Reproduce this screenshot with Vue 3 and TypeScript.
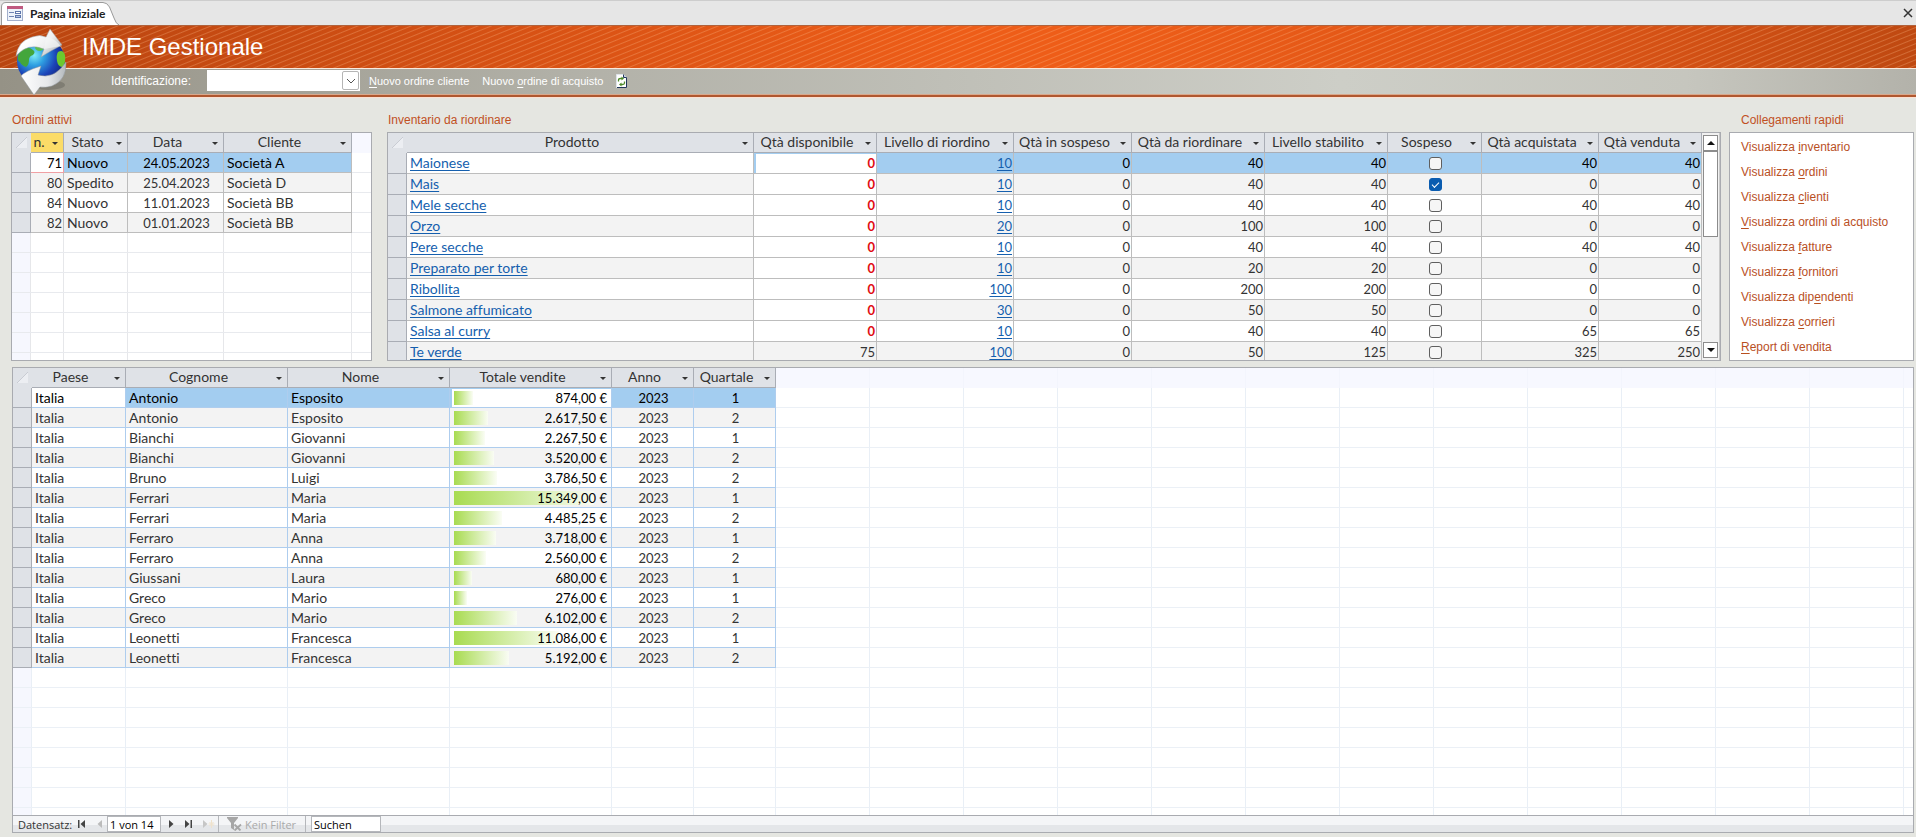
<script setup lang="ts">
import { computed, ref } from 'vue'

interface Column {
  label: string
  width: number
  align: 'left' | 'center' | 'right'
}

interface Sale {
  country: string
  surname: string
  name: string
  total: number
  year: number
  quarter: number
}

interface QuickLink {
  before: string
  key: string
  after: string
}

const SELECTOR_WIDTH = 19

const customerId = ref('')
const recordPosition = ref('1 von 14')
const searchText = ref('Suchen')

const orderColumns: Column[] = [
  { label: 'n.', width: 33, align: 'right' },
  { label: 'Stato', width: 64, align: 'left' },
  { label: 'Data', width: 96, align: 'center' },
  { label: 'Cliente', width: 128, align: 'left' },
]

const orders: string[][] = [
  ['71', 'Nuovo', '24.05.2023', 'Società A'],
  ['80', 'Spedito', '25.04.2023', 'Società D'],
  ['84', 'Nuovo', '11.01.2023', 'Società BB'],
  ['82', 'Nuovo', '01.01.2023', 'Società BB'],
]

const stockColumns: Column[] = [
  { label: 'Prodotto', width: 0, align: 'left' },
  { label: 'Qtà disponibile', width: 123, align: 'right' },
  { label: 'Livello di riordino', width: 137, align: 'right' },
  { label: 'Qtà in sospeso', width: 118, align: 'right' },
  { label: 'Qtà da riordinare', width: 133, align: 'right' },
  { label: 'Livello stabilito', width: 123, align: 'right' },
  { label: 'Sospeso', width: 94, align: 'center' },
  { label: 'Qtà acquistata', width: 117, align: 'right' },
  { label: 'Qtà venduta', width: 103, align: 'right' },
]

const stock = ref([
  { product: 'Maionese', available: 0, reorder: 10, pending: 0, toOrder: 40, target: 40, stopped: false, bought: 40, sold: 40 },
  { product: 'Mais', available: 0, reorder: 10, pending: 0, toOrder: 40, target: 40, stopped: true, bought: 0, sold: 0 },
  { product: 'Mele secche', available: 0, reorder: 10, pending: 0, toOrder: 40, target: 40, stopped: false, bought: 40, sold: 40 },
  { product: 'Orzo', available: 0, reorder: 20, pending: 0, toOrder: 100, target: 100, stopped: false, bought: 0, sold: 0 },
  { product: 'Pere secche', available: 0, reorder: 10, pending: 0, toOrder: 40, target: 40, stopped: false, bought: 40, sold: 40 },
  { product: 'Preparato per torte', available: 0, reorder: 10, pending: 0, toOrder: 20, target: 20, stopped: false, bought: 0, sold: 0 },
  { product: 'Ribollita', available: 0, reorder: 100, pending: 0, toOrder: 200, target: 200, stopped: false, bought: 0, sold: 0 },
  { product: 'Salmone affumicato', available: 0, reorder: 30, pending: 0, toOrder: 50, target: 50, stopped: false, bought: 0, sold: 0 },
  { product: 'Salsa al curry', available: 0, reorder: 10, pending: 0, toOrder: 40, target: 40, stopped: false, bought: 65, sold: 65 },
  { product: 'Te verde', available: 75, reorder: 100, pending: 0, toOrder: 50, target: 125, stopped: false, bought: 325, sold: 250 },
])

const salesColumns: Column[] = [
  { label: 'Paese', width: 94, align: 'left' },
  { label: 'Cognome', width: 162, align: 'left' },
  { label: 'Nome', width: 162, align: 'left' },
  { label: 'Totale vendite', width: 162, align: 'right' },
  { label: 'Anno', width: 82, align: 'center' },
  { label: 'Quartale', width: 82, align: 'center' },
]

const sale = (surname: string, name: string, total: number, quarter: number): Sale => ({
  country: 'Italia', surname, name, total, year: 2023, quarter,
})

const sales: Sale[] = [
  sale('Antonio', 'Esposito', 874, 1),
  sale('Antonio', 'Esposito', 2617.5, 2),
  sale('Bianchi', 'Giovanni', 2267.5, 1),
  sale('Bianchi', 'Giovanni', 3520, 2),
  sale('Bruno', 'Luigi', 3786.5, 2),
  sale('Ferrari', 'Maria', 15349, 1),
  sale('Ferrari', 'Maria', 4485.25, 2),
  sale('Ferraro', 'Anna', 3718, 1),
  sale('Ferraro', 'Anna', 2560, 2),
  sale('Giussani', 'Laura', 680, 1),
  sale('Greco', 'Mario', 276, 1),
  sale('Greco', 'Mario', 6102, 2),
  sale('Leonetti', 'Francesca', 11086, 1),
  sale('Leonetti', 'Francesca', 5192, 2),
]

const quickLinks: QuickLink[] = [
  { before: 'Visualizza ', key: 'i', after: 'nventario' },
  { before: 'Visualizza ', key: 'o', after: 'rdini' },
  { before: 'Visualizza ', key: 'c', after: 'lienti' },
  { before: '', key: 'V', after: 'isualizza ordini di acquisto' },
  { before: 'Visualizza ', key: 'f', after: 'atture' },
  { before: 'Visualizza ', key: 'f', after: 'ornitori' },
  { before: 'Visualizza dip', key: 'e', after: 'ndenti' },
  { before: 'Visualizza ', key: 'c', after: 'orrieri' },
  { before: '', key: 'R', after: 'eport di vendita' },
]

const euro = (value: number): string => {
  const [whole, cents] = value.toFixed(2).split('.')
  return `${whole.replace(/\B(?=(\d{3})+$)/g, '.')},${cents} €`
}

const barWidth = (total: number): string => `${Math.round(7 + (total / 15349) * 80)}%`

const sum = (columns: Column[]): number => columns.reduce((acc, c) => acc + c.width, SELECTOR_WIDTH)

/* Column rules that run on below the last record of a datasheet. */
const columnRules = (widths: number[], color: string) => {
  let x = SELECTOR_WIDTH
  const stops = [x - 1, ...widths.map((w) => (x += w) - 1)]
  return {
    backgroundImage: stops.map(() => `linear-gradient(${color}, ${color})`).join(','),
    backgroundPosition: stops.map((s) => `${s}px 0`).join(','),
  }
}

const orderRules = computed(() => columnRules(orderColumns.map((c) => c.width), '#e6e7ea'))
const salesRules = computed(() =>
  columnRules([...salesColumns.map((c) => c.width), ...Array<number>(24).fill(94)], '#e9eff6'),
)
</script>

<template>
  <div class="page">
    <nav class="tabs">
      <svg class="tab-shape" width="120" height="24" viewBox="0 0 120 24" aria-hidden="true">
        <path d="M1.500 24V6Q1.500 1.500 6 1.500H103Q107 1.500 109.500 6L114 17Q116 23 119 24" fill="#fff" stroke="#9a9a9a" />
      </svg>
      <a class="tab" href="#">
        <svg width="16" height="15" viewBox="0 0 16 15" aria-hidden="true">
          <rect x=".5" y=".5" width="15" height="14" fill="#eef3fa" stroke="#a3b0cc" />
          <rect width="16" height="3" fill="#c05a80" />
          <path d="M2 6.500h5M2 10.500h5" stroke="#7286b4" />
          <rect x="8.500" y="5.500" width="5" height="2" fill="#fff" stroke="#5f77ab" />
          <rect x="8.500" y="9.500" width="5" height="2" fill="#b4c4e4" stroke="#5f77ab" />
        </svg>
        Pagina iniziale
      </a>
      <button class="close" type="button" aria-label="Chiudi">
        <svg width="10" height="10" viewBox="0 0 10 10"><path d="M1 1l8 8M9 1L1 9" stroke="#333" stroke-width="1.500" /></svg>
      </button>
    </nav>

    <header class="head">
      <div class="banner"><h1>IMDE Gestionale</h1></div>
      <div class="toolbar">
        <label for="ident">Identificazione:</label>
        <span class="combo">
          <select id="ident" v-model="customerId"><option value=""></option></select>
          <span class="combo-arrow">
            <svg width="10" height="6" viewBox="0 0 10 6"><path d="M1 1l4 4 4-4" fill="none" stroke="#555" /></svg>
          </span>
        </span>
        <a class="cmd" href="#"><u>N</u>uovo ordine cliente</a>
        <a class="cmd" href="#">Nuovo <u>o</u>rdine di acquisto</a>
        <button class="refresh" type="button" aria-label="Aggiorna">
          <svg width="11" height="14" viewBox="0 0 11 14">
            <path d="M.5.5h7l3 3v10H.5z" fill="#fff" stroke="#dfe4ea" />
            <path d="M10.500 3.500v10H1" fill="none" stroke="#23365c" />
            <path d="M7.500.5v3h3" fill="#b9c6dc" stroke="#23365c" />
            <path d="M2.500 7.500V6q0-1.500 2-1.500H6M8.500 7.500V9q0 1.500-2 1.500H5" fill="none" stroke="#4e8a2a" stroke-width="1.300" />
            <path d="M5.500 2.500L8 4.500l-2.500 2zM5.500 8.500L3 10.500l2.500 2z" fill="#4e8a2a" />
          </svg>
        </button>
      </div>
      <svg class="logo" width="56" height="68" viewBox="0 0 56 68" aria-hidden="true">
        <defs>
          <radialGradient id="sea" cx=".36" cy=".38" r=".7">
            <stop offset="0" stop-color="#7fecf8" />
            <stop offset=".3" stop-color="#2fa0e2" />
            <stop offset=".65" stop-color="#1c44b8" />
            <stop offset="1" stop-color="#101f74" />
          </radialGradient>
          <linearGradient id="silver" x1="0" y1="0" x2="1" y2=".6">
            <stop offset="0" stop-color="#d4d7d9" />
            <stop offset=".35" stop-color="#fff" />
            <stop offset=".7" stop-color="#eff0f1" />
            <stop offset="1" stop-color="#b9bdc0" />
          </linearGradient>
          <linearGradient id="silverLow" x1="0" y1="0" x2="1" y2="0">
            <stop offset="0" stop-color="#fff" />
            <stop offset=".6" stop-color="#e6e8ea" />
            <stop offset="1" stop-color="#b3b8bc" />
          </linearGradient>
        </defs>
        <ellipse cx="34" cy="57" rx="17" ry="5" fill="#000" opacity=".16" />
        <circle cx="27" cy="33" r="24" fill="url(#sea)" />
        <path d="M4 28q2-6 7-8 5-1 8 2 3 2 0 5-4 1-4 5 0 5-3 7-5-2-6-5-3-1-2-6z" fill="#43a63c" />
        <path d="M21 19q6-3 10 0-2 4-6 4-4-1-4-4z" fill="#5fc04e" />
        <path d="M44 24q5-3 7 3 1 7-2 12-5 0-6-6-1-6 1-9z" fill="#6cc92f" />
        <path d="M2 28Q4 13 18 9q8-3 14 0l4-8 12 16q-10 5-21 12l3-8Q14 14 2 28z" fill="url(#silver)" stroke="#9aa0a4" stroke-width=".5" />
        <path d="M32 9q12 1 18 16l-3-7-17 3z" fill="#f4f5f5" opacity=".7" />
        <path d="M52 34Q53 52 38 58q-7 2-12 1l-6 8L7 48q4-5 20-10l-3 9q16 5 28-13z" fill="url(#silverLow)" stroke="#8e9498" stroke-width=".5" />
      </svg>
    </header>

    <main class="content">
      <div class="top">
        <section class="orders">
          <h2>Ordini attivi</h2>
          <div class="panel grid-bg" :style="orderRules">
            <div class="head-fill"></div>
            <table :style="{ width: sum(orderColumns) + 'px' }">
              <colgroup><col :style="{ width: SELECTOR_WIDTH + 'px' }" /><col v-for="c in orderColumns" :key="c.label" :style="{ width: c.width + 'px' }" /></colgroup>
              <thead>
                <tr>
                  <th class="sel"><svg width="11" height="11" viewBox="0 0 11 11"><path d="M11 0v11H0z" fill="#eceef2" /><path d="M0 11L11 0" stroke="#c9ccd3" /></svg></th>
                  <th v-for="(c, i) in orderColumns" :key="c.label" :class="{ sorted: i === 0 }"><button type="button">{{ c.label }}<i class="arrow"></i></button></th>
                </tr>
              </thead>
              <tbody>
                <tr v-for="(row, r) in orders" :key="r" :class="{ current: r === 0 }">
                  <td class="sel"></td>
                  <td v-for="(cell, i) in row" :key="i" :class="[orderColumns[i].align, { focus: r === 0 && i === 0 }]">{{ cell }}</td>
                </tr>
              </tbody>
            </table>
          </div>
        </section>

        <section class="stock">
          <h2>Inventario da riordinare</h2>
          <div class="panel with-scroll">
            <div class="viewport">
              <table class="tall">
                <colgroup><col :style="{ width: SELECTOR_WIDTH + 'px' }" /><col v-for="c in stockColumns" :key="c.label" :style="c.width ? { width: c.width + 'px' } : {}" /></colgroup>
                <thead>
                  <tr>
                    <th class="sel"><svg width="11" height="11" viewBox="0 0 11 11"><path d="M11 0v11H0z" fill="#eceef2" /><path d="M0 11L11 0" stroke="#c9ccd3" /></svg></th>
                    <th v-for="c in stockColumns" :key="c.label"><button type="button">{{ c.label }}<i class="arrow"></i></button></th>
                  </tr>
                </thead>
                <tbody>
                  <tr v-for="(s, r) in stock" :key="s.product" :class="{ current: r === 0 }">
                    <td class="sel"></td>
                    <td class="left plain"><a href="#">{{ s.product }}</a></td>
                    <td class="right" :class="{ missing: s.available === 0, active: r === 0 }">{{ s.available }}</td>
                    <td class="right"><a href="#">{{ s.reorder }}</a></td>
                    <td class="right">{{ s.pending }}</td>
                    <td class="right">{{ s.toOrder }}</td>
                    <td class="right">{{ s.target }}</td>
                    <td class="check"><input v-model="s.stopped" type="checkbox" :aria-label="'Sospeso: ' + s.product" /></td>
                    <td class="right">{{ s.bought }}</td>
                    <td class="right">{{ s.sold }}</td>
                  </tr>
                </tbody>
              </table>
            </div>
            <div class="scroll">
              <button type="button" aria-label="Su"><i class="up"></i></button>
              <div class="thumb"></div>
              <button class="last" type="button" aria-label="Giù"><i class="down"></i></button>
            </div>
          </div>
        </section>

        <section class="links">
          <h2>Collegamenti rapidi</h2>
          <ul class="panel">
            <li v-for="(l, i) in quickLinks" :key="i"><a href="#">{{ l.before }}<u>{{ l.key }}</u>{{ l.after }}</a></li>
          </ul>
        </section>
      </div>

      <section class="sales">
        <div class="sheet grid-bg" :style="salesRules">
          <div class="head-fill"></div>
          <table :style="{ width: sum(salesColumns) + 'px' }">
            <colgroup><col :style="{ width: SELECTOR_WIDTH + 'px' }" /><col v-for="c in salesColumns" :key="c.label" :style="{ width: c.width + 'px' }" /></colgroup>
            <thead>
              <tr>
                <th class="sel"><svg width="11" height="11" viewBox="0 0 11 11"><path d="M11 0v11H0z" fill="#eceef2" /><path d="M0 11L11 0" stroke="#c9ccd3" /></svg></th>
                <th v-for="c in salesColumns" :key="c.label"><button type="button">{{ c.label }}<i class="arrow"></i></button></th>
              </tr>
            </thead>
            <tbody>
              <tr v-for="(s, r) in sales" :key="r" :class="{ current: r === 0 }">
                <td class="sel"></td>
                <td class="left plain">{{ s.country }}</td>
                <td class="left">{{ s.surname }}</td>
                <td class="left">{{ s.name }}</td>
                <td class="total"><div><span class="bar" :style="{ width: barWidth(s.total) }"></span><span class="amount">{{ euro(s.total) }}</span></div></td>
                <td class="center">{{ s.year }}</td>
                <td class="center">{{ s.quarter }}</td>
              </tr>
            </tbody>
          </table>
        </div>
        <footer class="recordbar">
          <label for="record">Datensatz:</label>
          <span class="nav before">
            <button type="button" aria-label="Primo"><svg width="7" height="8" viewBox="0 0 7 8"><path d="M0 0h1.500v8H0zM7 0v8L2.500 4z" fill="#444" /></svg></button>
            <button type="button" aria-label="Precedente"><svg width="7" height="8" viewBox="0 0 7 8"><path d="M6 0v8L1.500 4z" fill="#bbb" /></svg></button>
          </span>
          <input id="record" v-model="recordPosition" class="position" type="text" />
          <span class="nav after">
            <button type="button" aria-label="Successivo"><svg width="7" height="8" viewBox="0 0 7 8"><path d="M1 0v8l4.500-4z" fill="#444" /></svg></button>
            <button type="button" aria-label="Ultimo"><svg width="7" height="8" viewBox="0 0 7 8"><path d="M0 0v8l4.500-4zM5.500 0H7v8H5.500z" fill="#444" /></svg></button>
            <button type="button" aria-label="Nuovo record"><svg width="14" height="8" viewBox="0 0 14 8"><path d="M1 0v8l4.500-4z" fill="#c6c6c6" /><path d="M9.500 0v8M6.500 4h6M7.500 2l4 4M11.500 2l-4 4" stroke="#efe2cc" /></svg></button>
          </span>
          <button class="filter" type="button" disabled>
            <svg width="15" height="14" viewBox="0 0 15 14"><path d="M0 0h11v1L7 6v7L4 11V6L0 1z" fill="#a6a6a6" /><path d="M7.500 7.500l6 6M14 7.500l-6.500 6" stroke="#a6a6a6" stroke-width="1.800" /></svg>
            Kein Filter
          </button>
          <input v-model="searchText" class="search" type="text" aria-label="Suchen" />
        </footer>
      </section>
    </main>
  </div>
</template>

<style>
body {
  margin: 0;
}
</style>

<style scoped>
.page {
  display: flex;
  flex-direction: column;
  min-height: 100vh;
  background: #e5e6e1;
  font-family: "Liberation Sans", Arial, sans-serif;
  font-size: 12px;
  color: #333;
}
.page *,
.page *::before,
.page *::after {
  box-sizing: border-box;
}
button {
  padding: 0;
  border: 0;
  background: none;
  font: inherit;
  color: inherit;
}
u {
  text-underline-offset: 2px;
}

.tabs {
  position: relative;
  display: flex;
  justify-content: space-between;
  align-items: center;
  height: 25px;
  border-top: 1px solid #cdcdcd;
  background: #e6e6e6;
  padding: 0 1px 0 7px;
}
.tab-shape {
  position: absolute;
  left: 0;
  bottom: 0;
}
.tab {
  position: relative;
  display: flex;
  align-items: center;
  gap: 7px;
  font: 700 12px Lato, "Open Sans", sans-serif;
  color: #222;
  text-decoration: none;
}
.close {
  display: flex;
  padding: 2px;
}

.head {
  position: relative;
}
.logo {
  position: absolute;
  left: 14px;
  top: 3px;
}
.banner {
  height: 43px;
  padding-left: 82px;
  border-top: 1px solid #b0623c;
  background:
    repeating-linear-gradient(158deg, rgba(255, 190, 140, 0) 0 3px, rgba(255, 190, 140, 0.3) 4px, rgba(255, 190, 140, 0) 5px),
    linear-gradient(90deg, #b94510, #d65114 26%, #ee5d18 50%, #ee5d18 58%, #dc5416 82%, #bf4911);
}
h1 {
  margin: 0;
  font-size: 24px;
  font-weight: 400;
  line-height: 42px;
  color: #fff;
}
.toolbar {
  display: flex;
  align-items: center;
  height: 29px;
  border-top: 1px solid #fbe9dc;
  border-bottom: 2px solid #b0572f;
  background: linear-gradient(90deg, #959286, #b2b1a8 30%, #cdcec7 70%, #c6c6be 88%, #b3b2aa);
  color: #fff;
  padding: 0 0 3px 111px;
  box-shadow: 0 1px #fbe0d2, inset 0 -1px #d9a88c;
}
.toolbar label {
  width: 96px;
  font-size: 12px;
}
.combo {
  position: relative;
  display: flex;
  width: 153px;
  height: 21px;
  margin-right: 9px;
}
.combo select {
  width: 100%;
  border: 0;
  border-radius: 0;
  background: #fff;
  appearance: none;
}
.combo-arrow {
  position: absolute;
  right: 1px;
  top: 1px;
  display: grid;
  place-items: center;
  width: 17px;
  height: 19px;
  border: 1px solid #b5b5b5;
  border-radius: 2px;
  background: #fff;
  pointer-events: none;
}
.cmd {
  margin-right: 13px;
  font-size: 11px;
  color: #fff;
  text-decoration: none;
}
.refresh {
  display: flex;
}

.content {
  flex: 1;
  display: flex;
  flex-direction: column;
  gap: 6px;
  padding: 14px 2px 4px 11px;
}
.top {
  display: flex;
}
h2 {
  margin: 0;
  height: 21px;
  padding-left: 1px;
  font-size: 12px;
  font-weight: 400;
  line-height: 18px;
  color: #c1501f;
}
.panel {
  height: 229px;
  border: 1px solid #a9abb0;
  background-color: #fff;
  overflow: hidden;
}
.orders {
  width: 361px;
  margin-right: 15px;
}
.stock {
  flex: 1;
  min-width: 0;
  margin-right: 8px;
}
.links {
  width: 185px;
}
.links h2 {
  padding-left: 12px;
}
.links ul {
  margin: 0;
  padding: 2px 0 0 11px;
  list-style: none;
}
.links li {
  line-height: 25px;
  white-space: nowrap;
}
.links a {
  color: #b9501f;
  text-decoration: none;
}

.grid-bg {
  position: relative;
  background-color: #fff;
  background-repeat: no-repeat;
  background-size: 1px 100%;
}
/* Row rules, and the tint of the selector strip. */
.grid-bg::before {
  content: "";
  position: absolute;
  inset: 20px 0 0;
  background:
    repeating-linear-gradient(transparent 0 19px, #e8eaee 19px 20px),
    linear-gradient(90deg, #f6f7fe 18px, transparent 18px);
  pointer-events: none;
}
.sales .grid-bg::before {
  background:
    repeating-linear-gradient(transparent 0 19px, #ebf0f6 19px 20px),
    linear-gradient(90deg, #f6f7fe 18px, transparent 18px);
}
.head-fill {
  position: absolute;
  inset: 0 0 auto;
  height: 20px;
  background: rgba(245, 246, 255, 0.8);
}

table {
  position: relative;
  table-layout: fixed;
  border-spacing: 0;
  font-family: Lato, "Open Sans", sans-serif;
  font-size: 13px;
  line-height: 18px;
  font-variant-ligatures: none;
}
th,
td {
  height: 20px;
  padding: 0 1px 0 3px;
  border: 0 solid #bdbdbd;
  border-width: 0 1px 1px 0;
  white-space: nowrap;
  overflow: hidden;
}
td {
  background: #fff;
}
tbody tr:nth-child(even) td {
  background: #f3f3f3;
}
th {
  padding: 0;
  border-color: #a9adb5;
  background: #dfe2e7;
  font-size: 14px;
  font-weight: 400;
}
th.sel {
  padding-left: 4px;
  border-color: #dfe2e7;
}
th.sel svg {
  display: block;
}
th.sorted {
  background: #fbdc68;
}
th button {
  display: flex;
  justify-content: center;
  position: relative;
  width: 100%;
  height: 19px;
  padding-right: 16px;
}
.arrow {
  position: absolute;
  right: 5px;
  top: 9px;
  border: 3px solid transparent;
  border-top-color: #333;
  border-bottom: 0;
}
tbody tr td.sel {
  background: #dfe2e7;
  border-color: #a9adb5;
}
.left {
  font-size: 14px;
  text-align: left;
}
.center {
  text-align: center;
}
.right {
  text-align: right;
}
tbody tr.current td:not(.sel) {
  color: #000;
}
tbody tr.current td:not(.sel, .plain, .focus, .total, .active) {
  background: #a3cdf0;
}
td.focus {
  border-color: #f0a0a4;
}
td a {
  color: #155fae;
  text-underline-offset: 2px;
}

.with-scroll {
  display: flex;
}
.viewport {
  flex: 1;
  min-width: 0;
}
.viewport table {
  width: 100%;
}
.tall tbody td {
  height: 21px;
  line-height: 19px;
  vertical-align: baseline;
}
.tall tbody td.check {
  vertical-align: middle;
}
tbody tr td.missing {
  background: #fff;
  color: #e00b12;
  font-weight: 700;
}
tbody tr.current td.missing {
  color: #e00b12;
}
td.active {
  box-shadow: inset 2px 1px #a3cdf0;
}
td input[type="checkbox"] {
  display: block;
  width: 13px;
  height: 13px;
  margin: 0 auto;
  border: 1px solid #5f5f5f;
  border-radius: 3px;
  background: #f6f6f6;
  appearance: none;
}
td input[type="checkbox"]:checked {
  border-color: #0a5cb0;
  background: #0a5cb0;
}
td input[type="checkbox"]:checked::after {
  content: "";
  display: block;
  width: 7px;
  height: 4px;
  margin: 3px 2px;
  border: solid #fff;
  border-width: 0 0 1px 1px;
  transform: rotate(-45deg);
}
.scroll {
  display: flex;
  flex-direction: column;
  width: 18px;
  padding: 2px 1px;
  border-right: 1px solid #c9c9c9;
  background: #f1f1f1;
}
.scroll button {
  display: grid;
  place-items: center;
  height: 16px;
  border: 1px solid #8c8c8c;
  background: #fff;
}
.scroll .last {
  margin-top: auto;
}
.thumb {
  height: 86px;
  border: 1px solid #8c8c8c;
  background: #fff;
}
.up,
.down {
  border: 4px solid transparent;
}
.up {
  border-bottom-color: #111;
  border-top: 0;
}
.down {
  border-top-color: #111;
  border-bottom: 0;
}

.sales {
  flex: 1;
  display: flex;
  flex-direction: column;
  margin-left: 1px;
  border: 1px solid #a9abb0;
}
.sheet {
  flex: 1;
  overflow: hidden;
}
.sales tbody td:not(.sel) {
  border-color: #aecdee;
}
.total {
  padding: 0;
}
.total div {
  position: relative;
  display: flex;
  align-items: center;
  justify-content: flex-end;
  height: 19px;
  padding-right: 4px;
  color: #000;
}
tbody tr.current .total div {
  box-shadow: inset 2px 1px #a3cdf0;
}
.bar {
  position: absolute;
  left: 4px;
  top: 3px;
  height: 14px;
  background: linear-gradient(90deg, #a8db50, rgba(250, 253, 244, 0.9));
}
.amount {
  position: relative;
}

.recordbar {
  display: flex;
  align-items: center;
  height: 17px;
  border-top: 1px solid #a9abb0;
  background: linear-gradient(#f4f5f7 55%, #e4e6e9 55%);
  font: 11px "Open Sans", "Noto Sans", sans-serif;
  padding-left: 5px;
}
.recordbar label {
  width: 60px;
}
.recordbar button {
  display: flex;
  align-items: center;
}
.nav {
  display: flex;
}
.before {
  gap: 11px;
  padding-right: 4px;
}
.after {
  gap: 10px;
  padding: 0 2px 0 7px;
}
.recordbar input {
  height: 16px;
  padding: 0 2px;
  border: 1px solid #b5b7bb;
  background: #fff;
  font: inherit;
  color: #000;
}
.recordbar .position {
  width: 54px;
}
.recordbar .filter {
  gap: 3px;
  width: 88px;
  height: 16px;
  margin-right: 5px;
  padding-left: 8px;
  border: solid #b5b7bb;
  border-width: 0 1px;
  color: #aaa;
}
.recordbar .search {
  width: 70px;
}
</style>
